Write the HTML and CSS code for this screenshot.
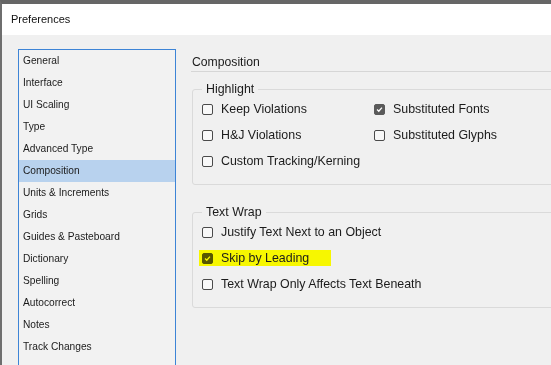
FILE: index.html
```html
<!DOCTYPE html>
<html>
<head>
  <meta name="viewport" content="width=device-width, initial-scale=1.0">
  <title>Preferences</title>
  <link rel="stylesheet" href="styles.css">
</head>
<body>

<div class="window">
  <div class="titlebar">Preferences</div>

  <div class="content">
    <ul class="nav">
      <li>General</li>
      <li>Interface</li>
      <li>UI Scaling</li>
      <li>Type</li>
      <li>Advanced Type</li>
      <li class="active">Composition</li>
      <li>Units &amp; Increments</li>
      <li>Grids</li>
      <li>Guides &amp; Pasteboard</li>
      <li>Dictionary</li>
      <li>Spelling</li>
      <li>Autocorrect</li>
      <li>Notes</li>
      <li>Track Changes</li>
    </ul>

    <div class="panel">
      <div class="panel-title">Composition</div>

      <fieldset class="group">
        <legend>Highlight</legend>
        <div class="options two-col">
          <label class="option"><span class="box"></span>Keep Violations</label>
          <label class="option">
            <span class="box checked"><svg viewBox="0 0 11 11"><polyline points="2.5,5.6 4.6,7.6 8.5,3.2"/></svg></span>Substituted Fonts
          </label>
          <label class="option"><span class="box"></span>H&amp;J Violations</label>
          <label class="option"><span class="box"></span>Substituted Glyphs</label>
          <label class="option"><span class="box"></span>Custom Tracking/Kerning</label>
        </div>
      </fieldset>

      <fieldset class="group">
        <legend>Text Wrap</legend>
        <div class="options">
          <label class="option"><span class="box"></span>Justify Text Next to an Object</label>
          <label class="option">
            <span class="marker">
              <span class="box checked"><svg viewBox="0 0 11 11"><polyline points="2.5,5.6 4.6,7.6 8.5,3.2"/></svg></span>Skip by Leading
            </span>
          </label>
          <label class="option"><span class="box"></span>Text Wrap Only Affects Text Beneath</label>
        </div>
      </fieldset>
    </div>
  </div>
</div>

</body>
</html>
```

FILE: styles.css
```css
body {
  margin: 0;
  padding: 0;
  overflow: hidden;
  background: #f0f0f0;
  font-family: "Liberation Sans", Arial, sans-serif;
  color: #1b1b1b;
}

.window {
  width: 620px;
  height: 400px;
  border-top: 4px solid #666666;
  border-left: 2px solid #6e6e6e;
  background: #f0f0f0;
}

.titlebar {
  height: 31px;
  line-height: 31px;
  padding-left: 9px;
  background: #ffffff;
  font-size: 11px;
  color: #111;
}

.content {
  display: flex;
  gap: 15px;
  padding: 14px 0 0 16px;
}

/* left category list */
.nav {
  list-style: none;
  margin: 0;
  padding: 0;
  width: 158px;
  height: 340px;
  box-sizing: border-box;
  border: 1px solid #3d84d6;
  background: #f2f2f2;
  overflow: hidden;
}

.nav li {
  height: 22px;
  line-height: 22px;
  padding-left: 4px;
  font-size: 10.2px;
  white-space: nowrap;
  user-select: none;
}

.nav li.active {
  background: #b8d2ee;
}

/* right side */
.panel {
  flex: 1;
}

.panel-title {
  margin-top: 5px;
  padding: 0 0 1px 1px;
  line-height: 16px;
  font-size: 12.2px;
  border-bottom: 1px solid #d6d6d6;
}

.group {
  margin: 9px 0 0 1px;
  padding: 3px 0 14px 9px;
  border: 1px solid #dadada;
  border-radius: 3px;
  font-size: 12.4px;
}

.group + .group {
  margin-top: 19px;
}

.group legend {
  padding: 0 4px;
  line-height: 16px;
}

.options {
  display: grid;
  row-gap: 8px;
}

.options.two-col {
  grid-template-columns: 172px auto;
}

.option {
  display: flex;
  align-items: center;
  gap: 8px;
  height: 18px;
  white-space: nowrap;
}

.box {
  display: inline-flex;
  width: 11px;
  height: 11px;
  box-sizing: border-box;
  border: 1px solid #4a4a4a;
  border-radius: 2px;
  background: #f8f8f8;
  flex-shrink: 0;
}

.box.checked {
  background: #5a5a5a;
  border-color: #5a5a5a;
}

.box svg {
  width: 9px;
  height: 9px;
}

.box polyline {
  fill: none;
  stroke: #ffffff;
  stroke-width: 1.6;
}

/* yellow marker drawn over the screenshot */
.marker {
  display: inline-flex;
  align-items: center;
  gap: 8px;
  height: 16px;
  margin-left: -3px;
  padding: 0 22px 0 3px;
  background: #f7f700;
}

.marker .box {
  mix-blend-mode: multiply;
}
```
